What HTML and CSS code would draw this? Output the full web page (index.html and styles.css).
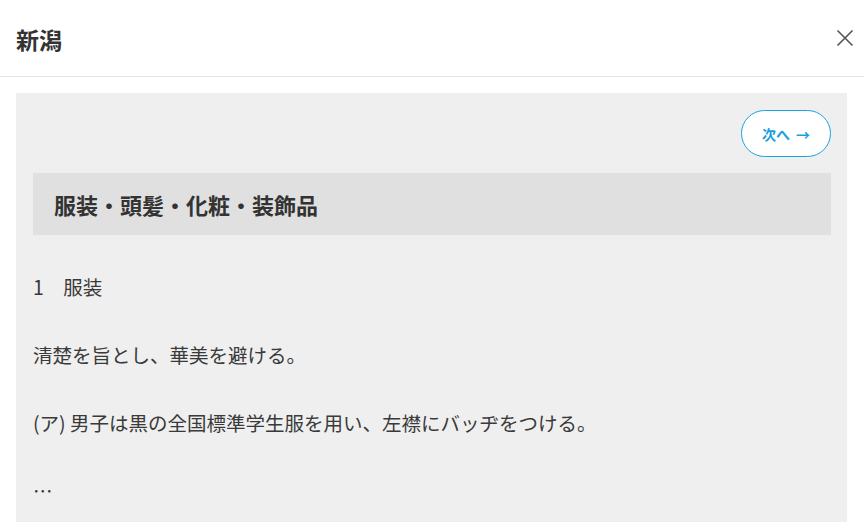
FILE: index.html
```html
<!DOCTYPE html>
<html lang="ja">
<head>
    <meta charset="UTF-8">
    <title>新潟</title>
    <link rel="stylesheet" href="styles.css">
</head>
<body>

    <div class="modal-header">
        <h2 class="modal-title">新潟</h2>
        <button class="close-btn" aria-label="閉じる">
            <svg width="18" height="18" viewBox="0 0 18 18">
                <path d="M1.5 1.5 L16.5 16.5 M16.5 1.5 L1.5 16.5" stroke="#555" stroke-width="1.6" fill="none"/>
            </svg>
        </button>
    </div>

    <div class="panel">
        <div class="panel-nav">
            <button class="next-btn">次へ <span class="arrow">→</span></button>
        </div>

        <h3 class="section-title">服装・頭髪・化粧・装飾品</h3>

        <p>1　服装</p>
        <p>清楚を旨とし、華美を避ける。</p>
        <p>(ア) 男子は黒の全国標準学生服を用い、左襟にバッヂをつける。</p>
        <p>…</p>
    </div>

</body>
</html>
```

FILE: styles.css
```css
body {
    font-family: "Noto Sans CJK JP", "Noto Sans", sans-serif;
    margin: 0;
    color: #333;
    background: #fff;
    overflow: hidden;
}
.modal-header {
    display: flex;
    align-items: center;
    justify-content: space-between;
    height: 76px;
    padding: 0 10px 0 16px;
    border-bottom: 1px solid #e3e3e3;
}
.modal-title {
    margin: 0;
    font-size: 23px;
    font-weight: 700;
    line-height: 1;
    padding-top: 3px;
    color: #333;
}
.close-btn {
    background: none;
    border: none;
    padding: 0;
    width: 18px;
    height: 18px;
    cursor: pointer;
}
.panel {
    background: #efefef;
    margin: 16px 17px 0 16px;
    padding: 17px 16px 10px 17px;
    min-height: 420px;
}
.panel-nav {
    display: flex;
    justify-content: flex-end;
}
.next-btn {
    font-family: inherit;
    background: #fff;
    color: #1a9fdc;
    border: 1px solid #1aa3e0;
    border-radius: 24px;
    width: 90px;
    height: 47px;
    font-size: 14px;
    font-weight: 700;
    cursor: pointer;
}
.next-btn .arrow {
    margin-left: 3px;
}
.section-title {
    margin: 16px 0 0;
    background: #e0e0e0;
    font-size: 22px;
    font-weight: 700;
    line-height: 34px;
    padding: 14px 21px;
    color: #333;
}
p {
    font-size: 19.5px;
    line-height: 34px;
    margin: 35px 0 0;
    color: #3a3a3a;
}
p + p {
    margin-top: 34px;
}
```
